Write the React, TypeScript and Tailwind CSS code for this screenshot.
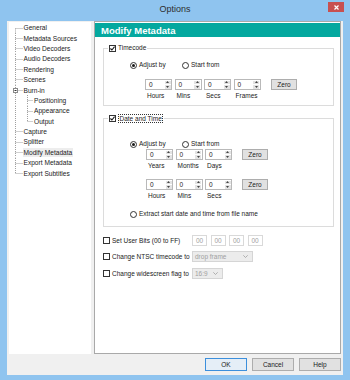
import React from 'react';

type TreeRow = {
  label: string;
  child?: boolean;
  first?: boolean;
  last?: boolean;
  lastChild?: boolean;
  expander?: boolean;
  selected?: boolean;
};

const treeRows: TreeRow[] = [
  { label: 'General', first: true },
  { label: 'Metadata Sources' },
  { label: 'Video Decoders' },
  { label: 'Audio Decoders' },
  { label: 'Rendering' },
  { label: 'Scenes' },
  { label: 'Burn-in', expander: true },
  { label: 'Positioning', child: true },
  { label: 'Appearance', child: true },
  { label: 'Output', child: true, lastChild: true },
  { label: 'Capture' },
  { label: 'Splitter' },
  { label: 'Modify Metadata', selected: true },
  { label: 'Export Metadata' },
  { label: 'Export Subtitles', last: true },
];

const dot = { stroke: '#a0a0a0', strokeWidth: 1, strokeDasharray: '1 1' };

const Connector = ({ row }: { row: TreeRow }) => (
  <svg width={row.child ? 24 : 13.5} height={10.4} className="shrink-0">
    <line x1={6.5} x2={6.5} y1={row.first ? 5.5 : 0} y2={row.last ? 5.5 : 10.4} {...dot} />
    {row.child ? (
      <>
        <line x1={18.5} x2={18.5} y1={0} y2={row.lastChild ? 5.5 : 10.4} {...dot} />
        <line x1={18.5} x2={23.5} y1={5.5} y2={5.5} {...dot} />
      </>
    ) : (
      <line x1={6.5} x2={13.5} y1={5.5} y2={5.5} {...dot} />
    )}
    {row.expander && (
      <g>
        <rect x={4.5} y={3.5} width={4} height={4} fill="#fff" stroke="#8a8a8a" />
        <line x1={5.5} x2={7.5} y1={5.5} y2={5.5} stroke="#333" />
      </g>
    )}
  </svg>
);

const Check = ({ checked }: { checked?: boolean }) => (
  <span className="w-[7px] h-[7px] border border-[#333] bg-white flex items-center justify-center shrink-0">
    {checked && (
      <svg width="5" height="5" viewBox="0 0 5 5">
        <path d="M0.4 2.5 L1.9 4 L4.6 0.7" fill="none" stroke="#1a1a1a" strokeWidth="1.1" />
      </svg>
    )}
  </span>
);

const Radio = ({ on }: { on?: boolean }) => (
  <span className="w-[7px] h-[7px] rounded-full border border-[#333] bg-white flex items-center justify-center shrink-0">
    {on && <span className="w-[3px] h-[3px] rounded-full bg-[#1a1a1a]" />}
  </span>
);

const Arrow = ({ down }: { down?: boolean }) => (
  <span className="flex-1 bg-[#e3e3e3] flex items-center justify-center">
    <svg width="3" height="2" viewBox="0 0 3 2">
      <path d={down ? 'M0 0 L1.5 2 L3 0Z' : 'M0 2 L1.5 0 L3 2Z'} fill="#444" />
    </svg>
  </span>
);

const Spin = () => (
  <div className="w-[27px] h-[11px] border border-[#b9b9b9] bg-white flex">
    <span className="flex-1 pl-[3px] leading-[9px]">0</span>
    <div className="w-[7px] flex flex-col gap-[1px] p-[0.5px]">
      <Arrow />
      <Arrow down />
    </div>
  </div>
);

const Field = ({ label }: { label: string }) => (
  <div className="flex flex-col w-[27px]">
    <Spin />
    <span className="mt-[1px] pl-[2px] h-[10px] leading-[10px] whitespace-nowrap">{label}</span>
  </div>
);

const ZeroButton = ({ className }: { className: string }) => (
  <div className={`w-[26px] h-[11px] border border-[#adadad] bg-[#e1e1e1] flex items-center justify-center ${className}`}>
    Zero
  </div>
);

const RadioPair = ({ className }: { className: string }) => (
  <div className={`h-[10px] flex items-center pl-[26px] ${className}`}>
    <div className="w-[52px] flex items-center gap-[2px]">
      <Radio on />
      <span>Adjust by</span>
    </div>
    <div className="flex items-center gap-[2px]">
      <Radio />
      <span>Start from</span>
    </div>
  </div>
);

const Chevron = () => (
  <svg width="5" height="3" viewBox="0 0 5 3">
    <path d="M0.3 0.3 L2.5 2.5 L4.7 0.3" fill="none" stroke="#a0a0a0" strokeWidth="0.8" />
  </svg>
);

const DisabledSelect = ({ value, width }: { value: string; width: string }) => (
  <div className={`${width} h-[11px] border border-[#d5d5d5] bg-[#ececec] flex items-center justify-between pl-[2px] pr-[4px] text-[#a0a0a0]`}>
    <span>{value}</span>
    <Chevron />
  </div>
);

const DialogButton = ({ label, primary }: { label: string; primary?: boolean }) => (
  <div
    className={`w-[42px] h-[13px] border flex items-center justify-center ${
      primary ? 'border-[#3c8fdc] bg-[#e5eef7]' : 'border-[#adadad] bg-[#e1e1e1]'
    }`}
  >
    {label}
  </div>
);

export default function App() {
  return (
    <div className="w-[350px] h-[380px] bg-[#8fc4ef] flex flex-col font-['Liberation_Sans',Arial,sans-serif] text-[6.5px] text-[#1a1a1a]">
      {/* title bar */}
      <div className="h-[21px] grid grid-cols-[1fr_auto_1fr]">
        <div />
        <div className="pt-[4px] text-[9px] leading-[10px] text-[#2e2e2e]">Options</div>
        <div className="flex justify-end">
          <div className="mt-[2px] mr-[6px] w-[16px] h-[10px] bg-[#c75050] flex items-center justify-center">
            <svg width="5" height="5" viewBox="0 0 5 5">
              <path d="M0.5 0.5 L4.5 4.5 M4.5 0.5 L0.5 4.5" stroke="#fff" strokeWidth="1.2" />
            </svg>
          </div>
        </div>
      </div>

      {/* dialog body */}
      <div className="mx-[7px] h-[354px] bg-[#f0f0f0] flex flex-col px-[2px]">
        <div className="flex gap-[3px] h-[333px]">
          {/* tree */}
          <div className="w-[82px] mt-[1px] bg-white pt-[0.5px] flex flex-col">
            {treeRows.map((row) => (
              <div key={row.label} className="h-[10.4px] flex items-center">
                <Connector row={row} />
                <span
                  className={`ml-[0.5px] px-[0.5px] whitespace-nowrap text-[6.6px] leading-[9px] ${
                    row.selected ? 'bg-[#ededed]' : ''
                  }`}
                >
                  {row.label}
                </span>
              </div>
            ))}
          </div>

          {/* page */}
          <div className="w-[247px] border border-[#a9a9a9] bg-white flex flex-col">
            <div className="h-[14px] mt-[1px] bg-[#04a89f] flex items-center pl-[6px]">
              <span className="text-white font-bold text-[9.5px] leading-[11px]">Modify Metadata</span>
            </div>

            <div className="flex flex-col pl-[8px] pr-[6px]">
              {/* Timecode */}
              <fieldset className="mt-[6px] border border-[#dcdcdc] pb-[4px]">
                <legend className="ml-[4px] px-[1px]">
                  <div className="h-[10px] flex items-center gap-[2px]">
                    <Check checked />
                    <span>Timecode</span>
                  </div>
                </legend>
                <RadioPair className="mt-[7px]" />
                <div className="mt-[9px] flex items-start pl-[41px] gap-[2.5px]">
                  <Field label="Hours" />
                  <Field label="Mins" />
                  <Field label="Secs" />
                  <Field label="Frames" />
                  <ZeroButton className="ml-[8px]" />
                </div>
              </fieldset>

              {/* Date and Time */}
              <fieldset className="mt-[7px] border border-[#dcdcdc] pb-[7px]">
                <legend className="ml-[4px] px-[1px]">
                  <div className="h-[10px] flex items-center gap-[2px]">
                    <Check checked />
                    <span className="border border-dotted border-[#333] px-[0.5px] leading-[7px]">Date and Time</span>
                  </div>
                </legend>
                <RadioPair className="mt-[16px]" />
                <div className="flex items-start pl-[42px] gap-[2.5px]">
                  <Field label="Years" />
                  <Field label="Months" />
                  <Field label="Days" />
                  <ZeroButton className="ml-[7.5px]" />
                </div>
                <div className="mt-[8px] flex items-start pl-[42px] gap-[2.5px]">
                  <Field label="Hours" />
                  <Field label="Mins" />
                  <Field label="Secs" />
                  <ZeroButton className="ml-[7.5px]" />
                </div>
                <div className="mt-[8px] h-[10px] flex items-center gap-[2px] pl-[26px]">
                  <Radio />
                  <span>Extract start date and time from file name</span>
                </div>
              </fieldset>

              {/* other options */}
              <div className="mt-[8px] h-[11px] flex items-center">
                <div className="w-[89px] flex items-center gap-[2px]">
                  <Check />
                  <span className="whitespace-nowrap">Set User Bits (00 to FF)</span>
                </div>
                <div className="flex gap-[3.5px]">
                  {['00', '00', '00', '00'].map((v, i) => (
                    <div key={i} className="w-[15px] h-[11px] border border-[#d9d9d9] bg-white pl-[3px] leading-[9px] text-[#a0a0a0]">
                      {v}
                    </div>
                  ))}
                </div>
              </div>
              <div className="mt-[5px] h-[11px] flex items-center">
                <div className="w-[89px] flex items-center gap-[2px]">
                  <Check />
                  <span className="whitespace-nowrap">Change NTSC timecode to</span>
                </div>
                <DisabledSelect value="drop frame" width="w-[61px]" />
              </div>
              <div className="mt-[6px] h-[11px] flex items-center">
                <div className="w-[89px] flex items-center gap-[2px]">
                  <Check />
                  <span className="whitespace-nowrap">Change widescreen flag to</span>
                </div>
                <DisabledSelect value="16:9" width="w-[31px]" />
              </div>
            </div>
          </div>
        </div>

        {/* buttons */}
        <div className="mt-[4px] flex justify-end gap-[5px]">
          <DialogButton label="OK" primary />
          <DialogButton label="Cancel" />
          <DialogButton label="Help" />
        </div>
      </div>
    </div>
  );
}
